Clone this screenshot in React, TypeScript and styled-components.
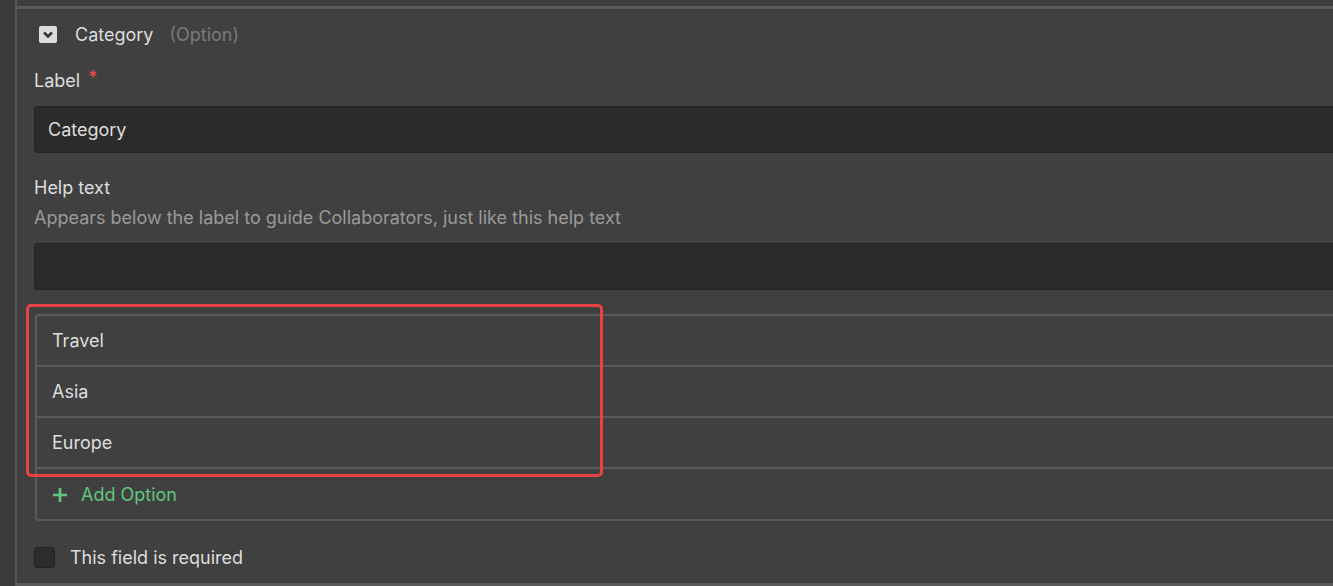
import React from "react";
import styled, { createGlobalStyle } from "styled-components";

const GlobalStyle = createGlobalStyle`
    html, body {
        margin: 0;
        padding: 0;
        background-color: #3c3c3c;
        overflow: hidden;
    }
    body {
        font-family: Inter, "Noto Sans", "Liberation Sans", sans-serif;
        color: #dedede;
    }
`;

const Page = styled.div`
    display: flex;
    width: 1420px;
    height: 586px;
`;

const Rail = styled.div`
    width: 15px;
    flex-shrink: 0;
    background-color: #3b3b3b;
`;

const Main = styled.div`
    flex: 1;
    display: flex;
    flex-direction: column;
    border-left: 2px solid #575757;
    background-color: #3d3d3d;
`;

const PrevStub = styled.div`
    height: 7px;
`;

const Section = styled.section`
    border-top: 3px solid #5a5a5a;
    border-bottom: 3px solid #5a5a5a;
    background-color: #404040;
    padding: 0 0 15px 17px;
    display: flex;
    flex-direction: column;
`;

const Header = styled.div`
    display: flex;
    align-items: center;
    height: 51px;
    padding-left: 5px;
    gap: 18px;
    font-size: 18px;
`;

const Toggle = styled.div`
    width: 18px;
    height: 17px;
    border-radius: 2px;
    background-color: #dcdcdc;
    display: flex;
    align-items: center;
    justify-content: center;
`;

const Title = styled.span`
    color: #dedede;
`;

const Hint = styled.span`
    color: #7a7a7a;
    margin-left: -2px;
`;

const FieldLabel = styled.div<{ $top: number }>`
    font-size: 18px;
    line-height: 24px;
    margin-top: ${(p) => p.$top}px;
    color: #dedede;
`;

const Star = styled.span`
    color: #f04848;
    margin-left: 8px;
    position: relative;
    top: -3px;
    font-size: 18px;
`;

const Description = styled.div`
    font-size: 18px;
    line-height: 24px;
    margin-top: 6px;
    color: #9a9a9a;
`;

const Input = styled.div`
    margin-top: 13px;
    height: 45px;
    border: 1px solid #242424;
    border-radius: 3px;
    background-color: #2b2b2b;
    display: flex;
    align-items: center;
    padding-left: 13px;
    font-size: 18px;
    color: #dedede;
`;

const OptionsWrap = styled.div`
    position: relative;
    margin-top: 24px;
    margin-left: 1px;
`;

const OptionsBox = styled.div`
    border: 2px solid #5a5a5a;
    border-radius: 4px;
    display: flex;
    flex-direction: column;
`;

const OptionRow = styled.div`
    height: 49px;
    display: flex;
    align-items: center;
    padding-left: 15px;
    font-size: 18px;
    color: #dedede;
    border-bottom: 2px solid #5a5a5a;
`;

const AddRow = styled.div`
    height: 50px;
    display: flex;
    align-items: center;
    padding-left: 16px;
    padding-top: 1px;
    box-sizing: border-box;
    gap: 14px;
    font-size: 18px;
    color: #5fc77d;
`;

const Highlight = styled.div`
    position: absolute;
    left: -9px;
    top: -10px;
    width: 571px;
    height: 167px;
    border: 3px solid #ea4242;
    border-radius: 5px;
    pointer-events: none;
`;

const CheckRow = styled.div`
    margin-top: 26px;
    display: flex;
    align-items: center;
    gap: 15px;
    font-size: 18px;
    color: #dedede;
`;

const CheckBox = styled.div`
    width: 19px;
    height: 19px;
    border: 1px solid #242424;
    border-radius: 3px;
    background-color: #2c2c2c;
`;

const options = ["Travel", "Asia", "Europe"];

export default function App() {
    return (
        <>
            <GlobalStyle />
            <Page>
                <Rail />
                <Main>
                    <PrevStub />
                    <Section>
                        <Header>
                            <Toggle>
                                <svg width="12" height="9" viewBox="0 0 12 9">
                                    <path
                                        d="M2 2.5 L6 6.5 L10 2.5"
                                        fill="none"
                                        stroke="#333"
                                        strokeWidth="2.6"
                                    />
                                </svg>
                            </Toggle>
                            <Title>Category</Title>
                            <Hint>(Option)</Hint>
                        </Header>
                        <FieldLabel $top={9}>
                            Label<Star>*</Star>
                        </FieldLabel>
                        <Input>Category</Input>
                        <FieldLabel $top={23}>Help text</FieldLabel>
                        <Description>
                            Appears below the label to guide Collaborators, just like this help text
                        </Description>
                        <Input />
                        <OptionsWrap>
                            <OptionsBox>
                                {options.map((o) => (
                                    <OptionRow key={o}>{o}</OptionRow>
                                ))}
                                <AddRow>
                                    <svg width="14" height="14" viewBox="0 0 14 14">
                                        <path d="M7 0 V14 M0 7 H14" stroke="#5fc77d" strokeWidth="2.6" />
                                    </svg>
                                    Add Option
                                </AddRow>
                            </OptionsBox>
                            <Highlight />
                        </OptionsWrap>
                        <CheckRow>
                            <CheckBox />
                            This field is required
                        </CheckRow>
                    </Section>
                </Main>
            </Page>
        </>
    );
}
